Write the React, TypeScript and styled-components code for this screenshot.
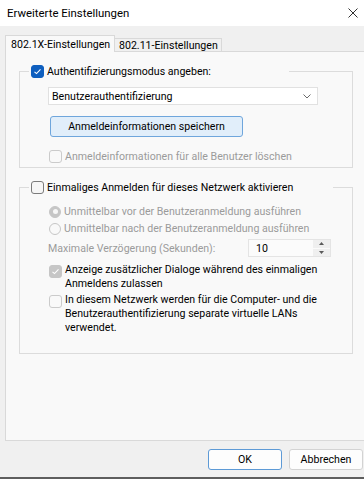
import React from "react";
import styled, { createGlobalStyle } from "styled-components";

const GlobalStyle = createGlobalStyle`
  html, body { margin: 0; padding: 0; background: #f0f0f0; }
  body {
    font-family: Roboto, "Noto Sans", "Liberation Sans", sans-serif;
    font-size: 10.6px;
    color: #000;
  }
  * { box-sizing: border-box; }
`;

const Window = styled.div`
  width: 364px;
  height: 479px;
  overflow: hidden;
  display: flex;
  flex-direction: column;
  background: #f0f0f0;
  border-bottom: 2px solid #5e5e5e;
`;

const TitleBar = styled.div`
  height: 26px;
  flex: none;
  background: #ffffff;
  display: flex;
  align-items: center;
  justify-content: space-between;
  padding-left: 7px;
  font-size: 11.4px;
`;

const CloseButton = styled.div`
  width: 22px;
  height: 26px;
  display: flex;
  align-items: center;
  justify-content: center;
`;

const Body = styled.div`
  flex: 1;
  display: flex;
  flex-direction: column;
  padding-top: 9px;
`;

const TabRow = styled.div`
  display: flex;
  align-items: flex-end;
  height: 17px;
  margin-bottom: -1px;
  padding-left: 5px;
`;

const Tab = styled.div<{ $active?: boolean; $w: number }>`
  width: ${(p) => p.$w}px;
  height: ${(p) => (p.$active ? 17 : 14)}px;
  padding-left: ${(p) => (p.$active ? 5 : 4)}px;
  padding-top: ${(p) => (p.$active ? 2 : 0)}px;
  display: flex;
  align-items: ${(p) => (p.$active ? "flex-start" : "center")};
  background: ${(p) => (p.$active ? "#f9f9f9" : "#f0f0f0")};
  border: 1px solid #d9d9d9;
  border-bottom: ${(p) => (p.$active ? "none" : "1px solid #d9d9d9")};
  border-left: ${(p) => (p.$active ? "1px solid #d9d9d9" : "none")};
  position: ${(p) => (p.$active ? "relative" : "static")};
  z-index: ${(p) => (p.$active ? 1 : "auto")};
  white-space: nowrap;
`;

const Panel = styled.div`
  margin-left: 5px;
  width: 370px;
  height: 390px;
  flex: none;
  background: #f9f9f9;
  border: 1px solid #d9d9d9;
  padding: 12px 0 0 13px;
  display: flex;
  flex-direction: column;
  gap: 12px;
`;

const Group = styled.fieldset<{ $pb: number }>`
  margin: 0;
  padding: 0 0 ${(p) => p.$pb}px 0;
  width: 334px;
  min-width: 0;
  border: 1px solid #dcdcdc;
`;

const Legend = styled.legend<{ $w: number }>`
  margin-left: 9px;
  padding: 0 0 0 2px;
  width: ${(p) => p.$w}px;
  height: 14px;
  display: flex;
  align-items: center;
  gap: 3px;
  white-space: nowrap;
`;

const Content = styled.div<{ $pt: number }>`
  display: flex;
  flex-direction: column;
  align-items: flex-start;
  padding-top: ${(p) => p.$pt}px;
`;

const Select = styled.div`
  margin-left: 28px;
  width: 270px;
  height: 18px;
  background: #ffffff;
  border: 1px solid #e1e1e1;
  display: flex;
  align-items: center;
  justify-content: space-between;
  padding: 0 6px 0 3px;
`;

const PushButton = styled.div<{ $w: number; $variant?: "accent" | "default" | "plain" }>`
  width: ${(p) => p.$w}px;
  height: 21px;
  border-radius: 3px;
  display: flex;
  align-items: center;
  justify-content: center;
  white-space: nowrap;
  background: ${(p) => (p.$variant === "accent" ? "#e1eefa" : "#fdfdfd")};
  border: 1px solid
    ${(p) =>
      p.$variant === "accent" ? "#6fa6dc" : p.$variant === "default" ? "#5d9ad6" : "#d3d3d3"};
`;

const SaveButton = styled(PushButton)`
  margin-left: 30px;
  margin-top: 11px;
`;

const Row = styled.div<{ $ml: number; $mt: number; $h?: number; $top?: boolean }>`
  margin-left: ${(p) => p.$ml}px;
  margin-top: ${(p) => p.$mt}px;
  ${(p) => (p.$h ? `height: ${p.$h}px;` : "")}
  display: flex;
  align-items: ${(p) => (p.$top ? "flex-start" : "center")};
  gap: 3px;
  white-space: nowrap;
`;

const Label = styled.span<{ $disabled?: boolean; $lh?: number }>`
  color: ${(p) => (p.$disabled ? "#9b9b9b" : "#000")};
  line-height: ${(p) => (p.$lh ? `${p.$lh}px` : "normal")};
`;

const DelayLabel = styled(Label)`
  width: 200px;
  flex: none;
`;

const Box = styled.span<{ $checked?: boolean; $disabled?: boolean; $mt?: number }>`
  flex: none;
  width: 13px;
  height: 13px;
  margin-top: ${(p) => p.$mt ?? 0}px;
  border-radius: 3px;
  display: flex;
  align-items: center;
  justify-content: center;
  background: ${(p) =>
    p.$checked ? (p.$disabled ? "#c6c6c6" : "#0f5fbf") : p.$disabled ? "#f9f9f9" : "#f6f6f6"};
  border: 1px solid
    ${(p) =>
      p.$checked ? (p.$disabled ? "#c6c6c6" : "#0f5fbf") : p.$disabled ? "#cbcbcb" : "#7b7b7b"};
`;

const RadioDot = styled.span<{ $checked?: boolean }>`
  flex: none;
  width: 12px;
  height: 12px;
  border-radius: 50%;
  display: flex;
  align-items: center;
  justify-content: center;
  background: ${(p) => (p.$checked ? "#c6c6c6" : "#f9f9f9")};
  border: 1px solid #c6c6c6;
  &::after {
    content: "";
    display: ${(p) => (p.$checked ? "block" : "none")};
    width: 5px;
    height: 5px;
    border-radius: 50%;
    background: #f7f7f7;
  }
`;

const DelayRow = styled.div`
  margin-left: 28px;
  margin-top: 2px;
  height: 18px;
  display: flex;
  align-items: center;
  white-space: nowrap;
`;

const SpinBox = styled.div`
  width: 83px;
  height: 18px;
  background: #fbfbfb;
  border: 1px solid #e4e4e4;
  display: flex;
  align-items: center;
  justify-content: space-between;
  padding-left: 7px;
  color: #000;
`;

const SpinButtons = styled.div`
  width: 17px;
  height: 16px;
  display: flex;
  flex-direction: column;
  gap: 1px;
`;

const SpinPart = styled.div`
  flex: 1;
  background: #efefef;
  display: flex;
  align-items: center;
  justify-content: center;
`;

const Footer = styled.div`
  flex: 1;
  display: flex;
  justify-content: flex-end;
  align-items: flex-start;
  padding-top: 8px;
  padding-right: 1px;
  gap: 7px;
`;

const Check = ({ color = "#fff" }: { color?: string }) => (
  <svg width="9" height="9" viewBox="0 0 9 9">
    <polyline points="1.5,4.8 3.5,6.6 7.5,2.4" fill="none" stroke={color} strokeWidth="1.1" />
  </svg>
);

export default function App() {
  return (
    <>
      <GlobalStyle />
      <Window>
        <TitleBar>
          <span>Erweiterte Einstellungen</span>
          <CloseButton>
            <svg width="10" height="10" viewBox="0 0 10 10">
              <path d="M0.5 0.5 L9.5 9.5 M9.5 0.5 L0.5 9.5" stroke="#1a1a1a" strokeWidth="0.9" />
            </svg>
          </CloseButton>
        </TitleBar>
        <Body>
          <TabRow>
            <Tab $active $w={110}>802.1X-Einstellungen</Tab>
            <Tab $w={107}>802.11-Einstellungen</Tab>
          </TabRow>
          <Panel>
            <Group $pb={4}>
              <Legend $w={260}>
                <Box $checked>
                  <Check />
                </Box>
                <Label>Authentifizierungsmodus angeben:</Label>
              </Legend>
              <Content $pt={9}>
                <Select>
                  <span>Benutzerauthentifizierung</span>
                  <svg width="8" height="5" viewBox="0 0 8 5">
                    <polyline points="0.5,0.5 4,4 7.5,0.5" fill="none" stroke="#6a6a6a" strokeWidth="1" />
                  </svg>
                </Select>
                <SaveButton $w={193} $variant="accent">
                  Anmeldeinformationen speichern
                </SaveButton>
                <Row $ml={29} $mt={13} $h={13}>
                  <Box $disabled />
                  <Label $disabled>Anmeldeinformationen für alle Benutzer löschen</Label>
                </Row>
              </Content>
            </Group>
            <Group $pb={18}>
              <Legend $w={304}>
                <Box />
                <Label>Einmaliges Anmelden für dieses Netzwerk aktivieren</Label>
              </Legend>
              <Content $pt={9}>
                <Row $ml={29} $mt={0} $h={17}>
                  <RadioDot $checked />
                  <Label $disabled>Unmittelbar vor der Benutzeranmeldung ausführen</Label>
                </Row>
                <Row $ml={29} $mt={0} $h={17}>
                  <RadioDot />
                  <Label $disabled>Unmittelbar nach der Benutzeranmeldung ausführen</Label>
                </Row>
                <DelayRow>
                  <DelayLabel $disabled>Maximale Verzögerung (Sekunden):</DelayLabel>
                  <SpinBox>
                    <span>10</span>
                    <SpinButtons>
                      <SpinPart>
                        <svg width="5" height="3" viewBox="0 0 5 3">
                          <polygon points="0,3 2.5,0 5,3" fill="#5a5a5a" />
                        </svg>
                      </SpinPart>
                      <SpinPart>
                        <svg width="5" height="3" viewBox="0 0 5 3">
                          <polygon points="0,0 2.5,3 5,0" fill="#5a5a5a" />
                        </svg>
                      </SpinPart>
                    </SpinButtons>
                  </SpinBox>
                </DelayRow>
                <Row $ml={29} $mt={6} $top>
                  <Box $checked $disabled $mt={2}>
                    <Check />
                  </Box>
                  <Label $lh={13.5}>
                    Anzeige zusätzlicher Dialoge während des einmaligen
                    <br />
                    Anmeldens zulassen
                  </Label>
                </Row>
                <Row $ml={29} $mt={3} $top>
                  <Box $disabled $mt={2} />
                  <Label $lh={14}>
                    In diesem Netzwerk werden für die Computer- und die
                    <br />
                    Benutzerauthentifizierung separate virtuelle LANs
                    <br />
                    verwendet.
                  </Label>
                </Row>
              </Content>
            </Group>
          </Panel>
          <Footer>
            <PushButton $w={74} $variant="default">
              OK
            </PushButton>
            <PushButton $w={74} $variant="plain">
              Abbrechen
            </PushButton>
          </Footer>
        </Body>
      </Window>
    </>
  );
}
